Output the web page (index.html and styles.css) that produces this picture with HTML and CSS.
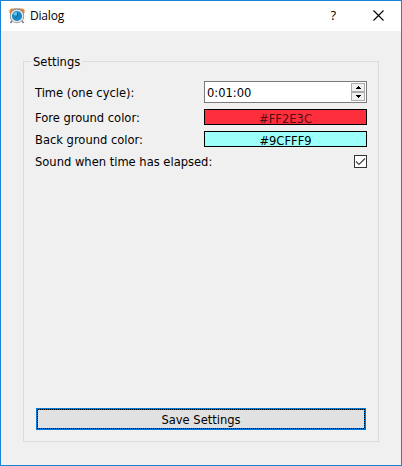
FILE: index.html
```
<!DOCTYPE html>
<html lang="en">
<head>
<meta charset="utf-8">
<title>Dialog</title>
<link rel="stylesheet" href="styles.css">
</head>
<body>
<div class="window">
  <header class="titlebar">
    <svg class="app-icon" width="16" height="16" viewBox="0 0 16 16">
      <path d="M3 13l-1.500 2M13 13l1.500 2" stroke="#777" stroke-width="1.500"/>
      <path d="M.5 5V2l2-1.500h3L2 6zM15.500 5V2l-2-1.500h-3l3.500 5.500z" fill="#e88438"/>
      <path d="M5 1h6" stroke="#777" stroke-width="1"/>
      <circle cx="8" cy="8" r="7.200" fill="#777"/>
      <circle cx="8" cy="8" r="5.800" fill="#1689c6" stroke="#e2e6e8" stroke-width="1.500"/>
      <path d="M4 6q2-3 6-2L7 8z" fill="#65c6eb"/>
      <path d="M8.500 4v4l-2.500 2" fill="none" stroke="#125f94" stroke-width="1"/>
    </svg>
    <span class="title">Dialog</span>
    <span class="help">?</span>
    <svg class="close" width="11" height="11" viewBox="0 0 11 11"><path d="M.5 .5l10 10M10.500 .5l-10 10" stroke="#000" stroke-width="1.100"/></svg>
  </header>
  <main class="content">
    <fieldset class="group">
      <legend>Settings</legend>
      <div class="row row-time">
        <label>Time (one cycle):</label>
        <div class="spinbox">
          <span class="value">0:01:00</span>
          <div class="steps">
            <i><svg width="5" height="3" viewBox="0 0 5 3" shape-rendering="crispEdges"><path d="M2 0h1v1h1v1h1v1H0V2h1V1h1z"/></svg></i>
            <i><svg width="5" height="3" viewBox="0 0 5 3" shape-rendering="crispEdges"><path d="M0 0h5v1H4v1H3v1H2V2H1V1H0z"/></svg></i>
          </div>
        </div>
      </div>
      <div class="row"><label>Fore ground color:</label><div class="swatch fore">#FF2E3C</div></div>
      <div class="row"><label>Back ground color:</label><div class="swatch back">#9CFFF9</div></div>
      <div class="row"><label>Sound when time has elapsed:</label>
        <span class="check"><svg width="11" height="11" viewBox="0 0 11 11"><path d="M1 5.500l3 3 6-6" fill="none" stroke="#444" stroke-width="1.200"/></svg></span>
      </div>
      <button class="save"><span class="focus"><span class="face">Save Settings</span></span></button>
    </fieldset>
  </main>
</div>
</body>
</html>
```
FILE: styles.css
```
* { box-sizing: border-box; }
body { margin: 0; }
.window {
  width: 402px; height: 466px;
  display: flex; flex-direction: column;
  border: 1px solid #1883d7;
  background: #f0f0f0; color: #000;
  font: 12.8px/16px "DejaVu Sans Condensed", "DejaVu Sans", sans-serif;
}
.titlebar {
  height: 30px; flex: none;
  display: flex; align-items: center;
  padding: 0 13px 0 8px;
  background: #fff;
  font-family: "Open Sans", "Noto Sans", sans-serif;
  font-size: 12px;
}
.title { margin-left: 5px; flex: 1; letter-spacing: -.2px; }
.help { margin: -2px 37px 0 0; font-size: 13px; font-weight: 500; }
.close { margin: -2px 4px 0 0; }
.content { flex: 1; padding: 22px 22px 23px; display: flex; }
.group {
  flex: 1; min-width: 0; margin: 0; padding: 11px 11px 11px;
  display: flex; flex-direction: column;
  border: 1px solid #dcdcdc;
}
legend { margin-left: -4px; padding: 0 2px; height: 16px; line-height: 18px; }
.row { height: 22px; display: flex; align-items: center; justify-content: space-between; }
.row-time { height: 24px; margin-bottom: 2px; }
label { white-space: nowrap; padding-top: 2px; }
.spinbox {
  width: 163px; height: 22px;
  display: flex; align-items: center; justify-content: space-between;
  padding: 0 1px 0 2px;
  border: 1px solid #7a7a7a; background: #fff;
}
.value { padding-top: 2px; }
.steps { width: 14px; height: 18px; display: flex; flex-direction: column; }
.steps i {
  flex: 1; display: flex; align-items: center; justify-content: center;
  border: 1px solid #acacac; background: #f0f0f0;
}
.swatch {
  width: 163px; height: 16px;
  border: 1px solid #000;
  line-height: 17px; text-align: center;
}
.fore { background: #ff2e3c; color: #500e13; }
.back { background: #9cfff9; }
.check { width: 13px; height: 13px; border: 1px solid #333; background: #fff; display: flex; }
.save {
  height: 22px; margin: auto 1px 0; padding: 0;
  border: 1px solid #0078d7; background: #0078d7;
  color: #000; font: inherit; display: flex;
}
.focus {
  flex: 1; height: 20px; padding: 1px;
  background: repeating-conic-gradient(#000 0 25%, #0078d7 0 50%) 0 0 / 2px 2px;
}
.face { display: block; height: 18px; line-height: 20px; background: #e1e1e1; }
```
